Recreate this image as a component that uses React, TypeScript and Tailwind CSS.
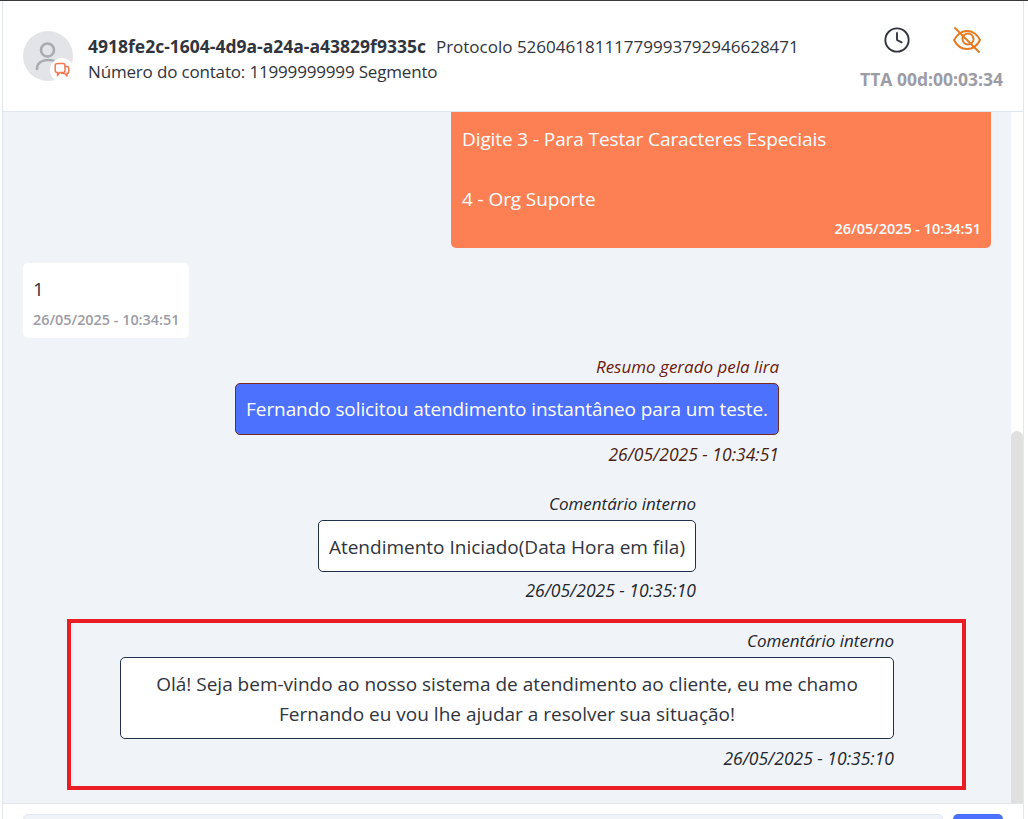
import { Clock } from 'lucide-react';

function Note({ label, time, children, dark, timeClass }: { label: string; time: string; children: React.ReactNode; dark?: boolean; timeClass: string }) {
  return (
    <div className="flex flex-col items-end">
      <div className={`text-[17px] leading-[22px] italic ${dark ? 'text-[#6b1a0c]' : 'text-[#22262e]'}`}>{label}</div>
      {children}
      <div className={`${timeClass} text-[17.5px] leading-[22px] italic ${dark ? 'text-[#4a1d12]' : 'text-[#22262e]'}`}>{time}</div>
    </div>
  );
}

export default function App() {
  return (
    <div className="flex h-[819px] w-[1028px] flex-col overflow-hidden border-t border-[#3a3a3a] bg-white pl-[2px] pr-[4px] font-['Open_Sans',sans-serif] text-[#30343c]">
      <div className="flex min-h-0 flex-1 flex-col border-x border-[#e2e6ef]">
        <header className="flex h-[111px] shrink-0 items-center justify-between border-b border-[#e2e6ef] pl-[20px] pr-[20px]">
          <div className="flex items-center gap-[15px]">
            <div className="relative h-[50px] w-[50px] rounded-full bg-[#e3e4e8]">
              <svg viewBox="0 0 50 50" className="h-[50px] w-[50px] text-[#a9abb1]" fill="none" stroke="currentColor" strokeWidth="2.6" strokeLinecap="round">
                <circle cx="24.5" cy="19" r="6.5" />
                <path d="M14 38C14 32 19 29 25 29C31 29 36 31 38 35" />
              </svg>
              <div className="absolute bottom-[-1px] right-[-1px] flex h-[24px] w-[24px] items-center justify-center rounded-full bg-white">
                <svg viewBox="0 0 16 16" className="h-[16px] w-[16px] text-[#f5784f]" fill="none" stroke="currentColor" strokeWidth="1.5" strokeLinejoin="round" strokeLinecap="round">
                  <path d="M4 1.5H9C10.4 1.5 11 2.2 11 3.5V8.5C11 9.8 10.4 10.5 9 10.5H5.5L3.5 13.5V10.5C2 10.5 1.2 9.8 1.2 8.5V3.5C1.2 2.2 2 1.5 4 1.5Z" />
                  <path d="M11 4.5H13C14.2 4.5 14.8 5.2 14.8 6.3V9.5C14.8 10.6 14.2 11.3 13 11.3V14L10.5 11.3H7.5" />
                </svg>
              </div>
            </div>
            <div className="pt-[6px] text-[17px] leading-[25px]">
              <div className="flex items-center gap-[10px]">
                <b className="text-[17.5px] font-bold">4918fe2c-1604-4d9a-a24a-a43829f9335c</b>
                <span>Protocolo 52604618111779993792946628471</span>
              </div>
              <div className="tracking-[-0.17px]">Número do contato: 11999999999 Segmento</div>
            </div>
          </div>
          <div className="flex flex-col items-end gap-[14px] pt-[3px]">
            <div className="flex items-center gap-[42px] pr-[22px]">
              <Clock className="h-[28px] w-[28px] text-[#30343c]" strokeWidth={1.6} />
              <svg viewBox="0 0 28 28" className="h-[28px] w-[28px] text-[#e57a1f]" fill="none" stroke="currentColor" strokeWidth="2" strokeLinecap="round">
                <path d="M1 14C5 7 10 5 14 5C19 5 24 8 27 14C24 20 19 23 14 23C9 23 4 20 1 14Z" />
                <circle cx="15" cy="13" r="5.5" />
                <path d="M2 2L26 26" />
              </svg>
            </div>
            <div className="text-[17.5px] font-bold leading-[22px] text-[#9b9ca6]">TTA 00d:00:03:34</div>
          </div>
        </header>

        <div className="flex min-h-0 flex-1">
          <main className="flex min-w-0 flex-1 flex-col justify-end overflow-hidden bg-[#f0f4f9] pb-[13px] pl-[20px] pr-[20px]">
            <div className="ml-auto w-[540px] shrink-0 rounded-b-[5px] bg-[#fd8055] pb-[9px] pl-[11px] pr-[10px] pt-[40px] text-white">
              <div className="text-[19px] leading-[30px] tracking-[-0.1px]">Digite 3 - Para Testar Caracteres Especiais</div>
              <div className="mt-[30px] text-[19px] leading-[30px] tracking-[-0.1px]">4 - Org Suporte</div>
              <div className="mt-[5px] text-right text-[14.4px] font-semibold leading-[20px]">26/05/2025 - 10:34:51</div>
            </div>

            <div className="mt-[15px] w-[166px] shrink-0 rounded-[5px] bg-white px-[10px] pb-[8px] pt-[11px]">
              <div className="text-[19px] leading-[30px]">1</div>
              <div className="mt-[6px] whitespace-nowrap text-[14.4px] font-semibold leading-[20px] text-[#9b9ca6]">26/05/2025 - 10:34:51</div>
            </div>

            <div className="mr-[212px] mt-[18px] shrink-0">
              <Note label="Resumo gerado pela lira" time="26/05/2025 - 10:34:51" timeClass="mt-[8px]" dark>
                <div className="mt-[5px] rounded-[5px] border border-[#7a2a1a] bg-[#4d71ff] px-[10px] py-[10px] text-[19px] leading-[30px] tracking-[-0.09px] text-white">
                  Fernando solicitou atendimento instantâneo para um teste.
                </div>
              </Note>
            </div>

            <div className="mr-[295px] mt-[28px] shrink-0">
              <Note label="Comentário interno" time="26/05/2025 - 10:35:10" timeClass="mt-[7px]">
                <div className="mt-[5px] rounded-[5px] border border-[#22304a] bg-white px-[10px] pb-[9px] pt-[11px] text-[19px] leading-[30px]">
                  Atendimento Iniciado(Data Hora em fila)
                </div>
              </Note>
            </div>

            <div className="ml-[44px] mr-[25px] mt-[18px] shrink-0 border-[4px] border-[#ea1c24] pb-[17px] pl-[49px] pr-[68px] pt-[7px]">
              <Note label="Comentário interno" time="26/05/2025 - 10:35:10" timeClass="mt-[8px]">
                <div className="mt-[5px] w-full rounded-[5px] border border-[#22304a] bg-white px-[30px] pb-[9px] pt-[11px] text-center text-[19px] leading-[30px]">
                  Olá! Seja bem-vindo ao nosso sistema de atendimento ao cliente, eu me chamo Fernando eu vou lhe ajudar a resolver sua situação!
                </div>
              </Note>
            </div>
          </main>
          <div className="flex w-[12px] shrink-0 flex-col justify-end bg-white">
            <div className="h-[372px] rounded-t-full bg-[#e0e0e0]" />
          </div>
        </div>

        <footer className="flex h-[16px] shrink-0 gap-[10px] border-t border-[#e2e6ef] pl-[20px] pr-[20px] pt-[10px]">
          <div className="h-[30px] flex-1 rounded-[5px] border border-[#e2e6f5] bg-[#f0f4f9]" />
          <div className="h-[30px] w-[50px] rounded-[5px] bg-[#4d71ff]" />
        </footer>
      </div>
    </div>
  );
}
